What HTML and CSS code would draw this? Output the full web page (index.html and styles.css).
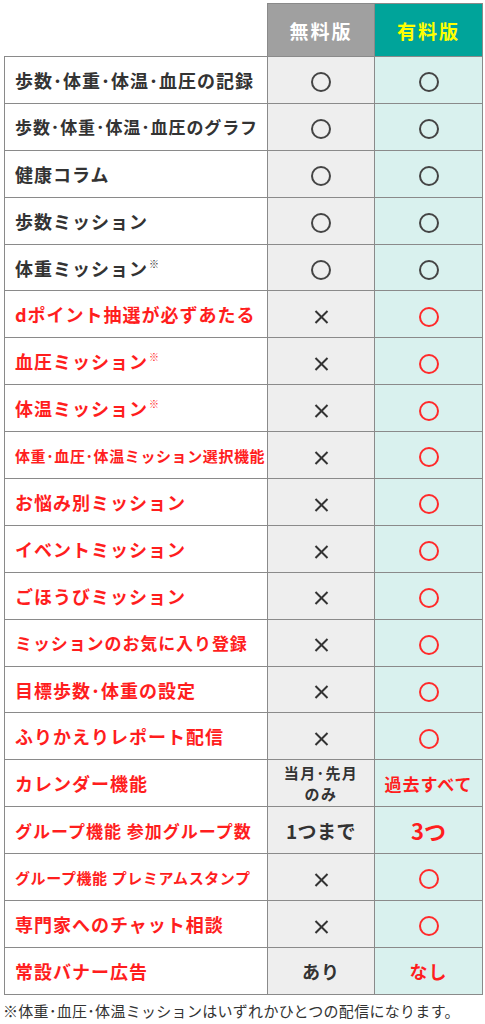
FILE: index.html
```html
<!DOCTYPE html>
<html lang="ja">

<head>
    <meta charset="UTF-8">
    <meta name="viewport" content="width=device-width, initial-scale=1.0">
    <title>無料版・有料版 比較表</title>

    <link rel="stylesheet" href="styles.css">
</head>

<body>
    <div class="main">
        <table class="compare">
            <colgroup>
                <col class="col-name">
                <col class="col-free">
                <col class="col-paid">
            </colgroup>
            <thead>
                <tr class="head">
                    <th class="blank"></th>
                    <th class="free-head">無料版</th>
                    <th class="paid-head">有料版</th>
                </tr>
            </thead>
            <tbody>
                <tr>
                    <td class="name">歩数･体重･体温･血圧の記録</td>
                    <td class="free"><span class="maru"></span></td>
                    <td class="paid"><span class="maru"></span></td>
                </tr>
                <tr>
                    <td class="name long">歩数･体重･体温･血圧のグラフ</td>
                    <td class="free"><span class="maru"></span></td>
                    <td class="paid"><span class="maru"></span></td>
                </tr>
                <tr>
                    <td class="name">健康コラム</td>
                    <td class="free"><span class="maru"></span></td>
                    <td class="paid"><span class="maru"></span></td>
                </tr>
                <tr>
                    <td class="name">歩数ミッション</td>
                    <td class="free"><span class="maru"></span></td>
                    <td class="paid"><span class="maru"></span></td>
                </tr>
                <tr>
                    <td class="name">体重ミッション<sup>※</sup></td>
                    <td class="free"><span class="maru"></span></td>
                    <td class="paid"><span class="maru"></span></td>
                </tr>
                <tr class="only">
                    <td class="name">dポイント抽選が必ずあたる</td>
                    <td class="free"><span class="batsu"></span></td>
                    <td class="paid"><span class="maru red"></span></td>
                </tr>
                <tr class="only">
                    <td class="name">血圧ミッション<sup>※</sup></td>
                    <td class="free"><span class="batsu"></span></td>
                    <td class="paid"><span class="maru red"></span></td>
                </tr>
                <tr class="only">
                    <td class="name">体温ミッション<sup>※</sup></td>
                    <td class="free"><span class="batsu"></span></td>
                    <td class="paid"><span class="maru red"></span></td>
                </tr>
                <tr class="only">
                    <td class="name small">体重･血圧･体温ミッション選択機能</td>
                    <td class="free"><span class="batsu"></span></td>
                    <td class="paid"><span class="maru red"></span></td>
                </tr>
                <tr class="only">
                    <td class="name">お悩み別ミッション</td>
                    <td class="free"><span class="batsu"></span></td>
                    <td class="paid"><span class="maru red"></span></td>
                </tr>
                <tr class="only">
                    <td class="name">イベントミッション</td>
                    <td class="free"><span class="batsu"></span></td>
                    <td class="paid"><span class="maru red"></span></td>
                </tr>
                <tr class="only">
                    <td class="name">ごほうびミッション</td>
                    <td class="free"><span class="batsu"></span></td>
                    <td class="paid"><span class="maru red"></span></td>
                </tr>
                <tr class="only">
                    <td class="name long">ミッションのお気に入り登録</td>
                    <td class="free"><span class="batsu"></span></td>
                    <td class="paid"><span class="maru red"></span></td>
                </tr>
                <tr class="only">
                    <td class="name">目標歩数･体重の設定</td>
                    <td class="free"><span class="batsu"></span></td>
                    <td class="paid"><span class="maru red"></span></td>
                </tr>
                <tr class="only">
                    <td class="name">ふりかえりレポート配信</td>
                    <td class="free"><span class="batsu"></span></td>
                    <td class="paid"><span class="maru red"></span></td>
                </tr>
                <tr class="only">
                    <td class="name">カレンダー機能</td>
                    <td class="free txt-s">当月･先月<br>のみ</td>
                    <td class="paid txt red">過去すべて</td>
                </tr>
                <tr class="only">
                    <td class="name group">グループ機能 参加グループ数</td>
                    <td class="free txt-l">1つまで</td>
                    <td class="paid txt-xl red">3つ</td>
                </tr>
                <tr class="only">
                    <td class="name small">グループ機能 プレミアムスタンプ</td>
                    <td class="free"><span class="batsu"></span></td>
                    <td class="paid"><span class="maru red"></span></td>
                </tr>
                <tr class="only">
                    <td class="name">専門家へのチャット相談</td>
                    <td class="free"><span class="batsu"></span></td>
                    <td class="paid"><span class="maru red"></span></td>
                </tr>
                <tr class="only">
                    <td class="name">常設バナー広告</td>
                    <td class="free txt-m">あり</td>
                    <td class="paid txt-m red">なし</td>
                </tr>
            </tbody>
        </table>
        <p class="note">※体重･血圧･体温ミッションはいずれかひとつの配信になります。</p>
    </div>
</body>

</html>
```

FILE: styles.css
```css
* {
    box-sizing: border-box;
}

body {
    margin: 0;
    background-color: #fff;
    font-family: "Noto Sans CJK JP", "Noto Sans", sans-serif;
    color: #333;
}

.main {
    width: 485px;
    padding: 3px 0 0 4px;
}

.compare {
    width: 478px;
    border-collapse: collapse;
    table-layout: fixed;
}

.col-name {
    width: 263px;
}

.col-free {
    width: 107px;
}

.col-paid {
    width: 108px;
}

.head th {
    height: 53px;
    font-size: 19px;
    font-weight: 700;
    letter-spacing: 2px;
    border: 1px solid #8a8a8a;
    text-align: center;
}

.head .blank {
    border: none;
    border-bottom: 1px solid #8a8a8a;
    background: none;
}

.free-head {
    background-color: #a0a0a0;
    color: #fff;
}

.paid-head {
    background-color: #00a49a;
    color: #ffff00;
}

td {
    height: 46.9px;
    padding: 0;
    border: 1px solid #8a8a8a;
    text-align: center;
    vertical-align: middle;
}

.name {
    text-align: left;
    padding-left: 10px;
    font-size: 18px;
    font-weight: 700;
    letter-spacing: 1px;
    color: #333;
    white-space: nowrap;
}

.name.long {
    font-size: 17px;
    letter-spacing: 0.9px;
}

.name.small {
    font-size: 15px;
    letter-spacing: 0.6px;
}

.name.group {
    font-size: 17px;
    letter-spacing: 1px;
}

.name sup {
    font-size: 10px;
    vertical-align: 8px;
    margin-left: 1px;
}

.only .name {
    color: #ff1e1e;
}

.free {
    background-color: #eeeeee;
}

.paid {
    background-color: #d9f1ee;
}

.maru {
    display: inline-block;
    width: 20px;
    height: 20px;
    border: 2px solid #444;
    border-radius: 50%;
    vertical-align: middle;
}

.maru.red {
    border-color: #ff2a2a;
}

.batsu {
    display: inline-block;
    position: relative;
    width: 13px;
    height: 13px;
    vertical-align: middle;
}

.batsu::before,
.batsu::after {
    content: "";
    position: absolute;
    left: -2px;
    top: 5.5px;
    width: 17px;
    height: 2px;
    background-color: #333;
    transform: rotate(45deg);
}

.batsu::after {
    transform: rotate(-45deg);
}

.txt-s {
    font-size: 15px;
    font-weight: 700;
    letter-spacing: 1.4px;
    line-height: 21px;
}

.txt {
    font-size: 17px;
    font-weight: 700;
    letter-spacing: 1px;
}

.txt-l {
    font-size: 19px;
    font-weight: 700;
    letter-spacing: 0.5px;
}

.txt-xl {
    font-size: 22px;
    font-weight: 700;
}

.txt-m {
    font-size: 18px;
    font-weight: 700;
    letter-spacing: 1px;
}

.red {
    color: #ff1e1e;
}

.note {
    margin: 5px 0 0 -1px;
    font-size: 15px;
    letter-spacing: 0.3px;
    color: #333;
    white-space: nowrap;
}
```
